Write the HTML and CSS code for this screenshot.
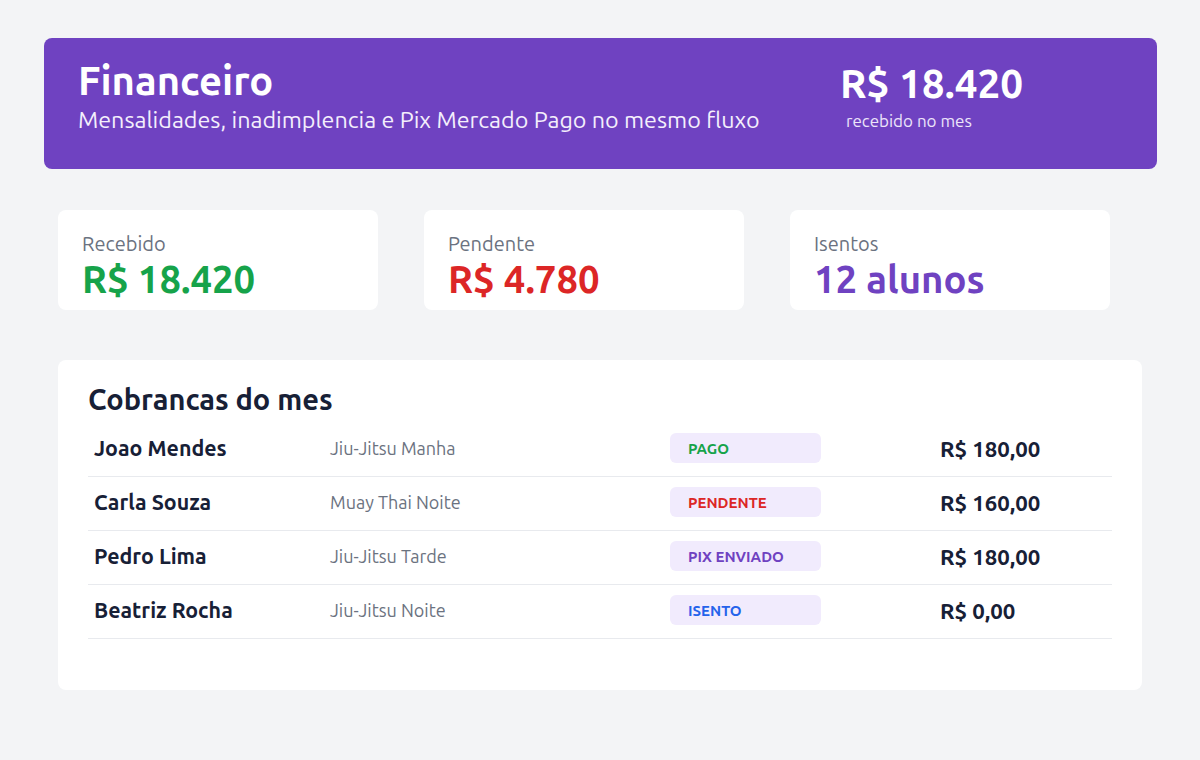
FILE: index.html
```html
<!DOCTYPE html>
<html lang="pt-BR">
<head>
<meta charset="utf-8">
<title>Financeiro</title>
<link rel="stylesheet" href="styles.css">
</head>
<body>
<div class="page">
  <header class="hero">
    <div class="hero-left">
      <h1 class="hero-title">Financeiro</h1>
      <p class="hero-sub">Mensalidades, inadimplencia e Pix Mercado Pago no mesmo fluxo</p>
    </div>
    <div class="hero-right">
      <div class="hero-amount">R$ 18.420</div>
      <div class="hero-caption">recebido no mes</div>
    </div>
  </header>

  <section class="stats">
    <div class="stat">
      <div class="stat-label">Recebido</div>
      <div class="stat-value green">R$ 18.420</div>
    </div>
    <div class="stat">
      <div class="stat-label">Pendente</div>
      <div class="stat-value red">R$ 4.780</div>
    </div>
    <div class="stat">
      <div class="stat-label">Isentos</div>
      <div class="stat-value purple">12 alunos</div>
    </div>
  </section>

  <section class="panel">
    <h2 class="panel-title">Cobrancas do mes</h2>
    <div class="rows">
      <div class="row">
        <div class="name">Joao Mendes</div>
        <div class="course">Jiu-Jitsu Manha</div>
        <div><span class="badge green">PAGO</span></div>
        <div class="amount">R$ 180,00</div>
      </div>
      <div class="row">
        <div class="name">Carla Souza</div>
        <div class="course">Muay Thai Noite</div>
        <div><span class="badge red">PENDENTE</span></div>
        <div class="amount">R$ 160,00</div>
      </div>
      <div class="row">
        <div class="name">Pedro Lima</div>
        <div class="course">Jiu-Jitsu Tarde</div>
        <div><span class="badge purple">PIX ENVIADO</span></div>
        <div class="amount">R$ 180,00</div>
      </div>
      <div class="row">
        <div class="name">Beatriz Rocha</div>
        <div class="course">Jiu-Jitsu Noite</div>
        <div><span class="badge blue">ISENTO</span></div>
        <div class="amount">R$ 0,00</div>
      </div>
    </div>
  </section>
</div>
</body>
</html>
```

FILE: styles.css
```css
* { box-sizing: border-box; }
html, body { margin: 0; padding: 0; }
body {
  background: #f3f4f6;
  font-family: Ubuntu, "Noto Sans", "Open Sans", sans-serif;
  color: #172036;
  width: 1200px;
  height: 760px;
  overflow: hidden;
}
.page {
  padding: 38px 43px 0 44px;
}
.hero {
  background: #6f42c1;
  border-radius: 8px;
  height: 131px;
  display: flex;
  justify-content: space-between;
  align-items: flex-start;
  padding: 20px 34px 0 34px;
  color: #fff;
}
.hero-title {
  margin: 0;
  font-size: 40px;
  font-weight: 700;
  line-height: 46px;
}
.hero-sub {
  margin: 0;
  font-size: 23.3px;
  line-height: 31px;
  color: #f4effc;
}
.hero-right {
  width: 283px;
  padding-top: 2px;
}
.hero-amount {
  font-size: 40.5px;
  font-weight: 700;
  line-height: 46px;
}
.hero-caption {
  margin: 4px 0 0 6px;
  font-size: 17px;
  line-height: 22px;
  color: #ece4fa;
}
.stats {
  margin: 41px 0 0 14px;
  width: 1052px;
  display: grid;
  grid-template-columns: repeat(3, 1fr);
  gap: 46px;
}
.stat {
  background: #fff;
  border-radius: 8px;
  height: 100px;
  padding: 22px 24px 0 24px;
}
.stat-label {
  font-size: 20px;
  line-height: 24px;
  color: #6b7280;
}
.stat-value {
  margin-top: 2px;
  font-size: 38.3px;
  font-weight: 700;
  line-height: 42px;
}
.green { color: #16a34a; }
.red { color: #dc2626; }
.purple { color: #6f42c1; }
.blue { color: #2563eb; }
.panel {
  margin: 50px 0 0 14px;
  width: 1084px;
  height: 330px;
  background: #fff;
  border-radius: 8px;
  padding: 19px 30px 0 30px;
}
.panel-title {
  margin: 0;
  font-size: 29px;
  font-weight: 700;
  line-height: 40px;
  color: #172036;
}
.rows {
  margin-top: 4px;
}
.row {
  display: grid;
  grid-template-columns: 236px 340px 270px 1fr;
  align-items: center;
  height: 54px;
  padding-left: 6px;
  padding-bottom: 3px;
  border-bottom: 1px solid #e8eaee;
}
.name {
  font-size: 21.4px;
  font-weight: 700;
}
.course {
  font-size: 18px;
  color: #6b7280;
}
.badge {
  display: flex;
  align-items: center;
  width: 151px;
  height: 30px;
  border-radius: 6px;
  background: #f1ebfd;
  padding-left: 18px;
  font-size: 15px;
  font-weight: 700;
}
.amount {
  font-size: 22.2px;
  font-weight: 700;
}
```
